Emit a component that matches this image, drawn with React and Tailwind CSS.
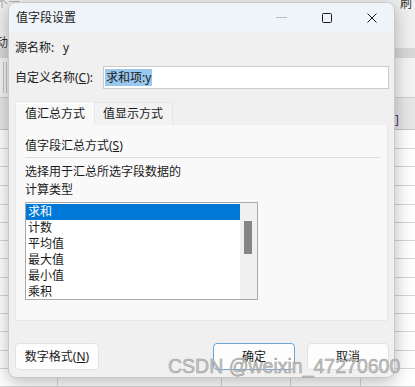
import React from 'react';

const font = "font-['Noto_Sans','Noto_Sans_CJK_SC',sans-serif]";

// spreadsheet rows behind the dialog (heights include the bottom line)
const gridRows = [20, 19, 20, 19, 19, 19, 19, 19, 19, 19, 19, 19, 19, 19];
const items = ['求和', '计数', '平均值', '最大值', '最小值', '乘积'];

const GridRow = ({ h }) => (
    <div className="flex border-b border-[#d6d6d6]" style={{ height: h }}>
        <div className="w-[58px] border-r border-[#d6d6d6]" />
        <div className="w-[164px] border-r border-[#d6d6d6]" />
        <div className="w-[69px] border-r border-[#d6d6d6]" />
        <div className="w-[70px] border-r border-[#d6d6d6]" />
        <div className="flex-1" />
    </div>
);

const Background = () => (
    <div className="flex flex-col w-[415px] h-[387px]">
        {/* ribbon */}
        <div className="h-[48px] bg-[#f0f0f0] flex justify-between text-[12px] text-[#333]">
            <div className="flex flex-col -ml-[4px]">
                <span className="text-[#aaa] leading-[10px] -mt-[2px]">不宁</span>
                <span className="mt-[28px] leading-[14px]">动</span>
            </div>
            <span className="mr-[3px] -mt-[3px] leading-[14px]">刷</span>
        </div>
        <div className="h-[10px] bg-[#d8d8d8]" />
        {/* formula bar */}
        <div className="h-[42px] bg-[#f4f4f4] border-b border-[#cfcfcf] flex">
            <div className="w-[3px]" />
            <div className="w-[4px] border-x border-[#c4c4c4] mt-[4px] mb-[4px]" />
        </div>
        {/* column header */}
        <div className="h-[33px] bg-[#e6e6e6] border-b border-[#c8c8c8] flex justify-end items-end pb-[2px]">
            <span className="text-[12px] leading-[14px] text-[#5b2a86] mr-[16px]">]</span>
        </div>
        {gridRows.map((h, i) => (
            <GridRow key={i} h={h} />
        ))}
    </div>
);

const Dialog = () => (
    <div className={`absolute left-[8px] top-[2px] w-[387px] h-[376px] rounded-[8px] border border-[#c9c9c9] bg-[#f0f0f0] overflow-hidden shadow-[0_4px_18px_rgba(0,0,0,0.28)] flex flex-col text-[12px] text-[#1a1a1a] ${font}`}>
        {/* title bar */}
        <div className="h-[29px] bg-[#eef4f9] flex items-center">
            <span className="pl-[7px] flex-1 leading-[16px]">值字段设置</span>
            <div className="w-[45px] h-[29px] flex items-center justify-center">
                <div className="w-[11px] h-[1px] bg-[#bdbdbd]" />
            </div>
            <div className="w-[45px] h-[29px] flex items-center justify-center">
                <svg width="10" height="10" viewBox="0 0 10 10">
                    <rect x="0.5" y="0.5" width="9" height="9" rx="1" fill="none" stroke="#1a1a1a" strokeWidth="1" />
                </svg>
            </div>
            <div className="w-[45px] h-[29px] flex items-center justify-center">
                <svg width="10" height="10" viewBox="0 0 10 10">
                    <path d="M0.5 0.5 L9.5 9.5 M9.5 0.5 L0.5 9.5" stroke="#1a1a1a" strokeWidth="1" />
                </svg>
            </div>
        </div>

        {/* body */}
        <div className="flex flex-col pl-[6px] pr-[5px]">
            <div className="mt-[6px] h-[20px] flex items-center">
                <span className="w-[48px]">源名称:</span>
                <span>y</span>
            </div>

            <div className="mt-[8px] h-[23px] flex items-center">
                <span className="w-[88px]">自定义名称(<span className="underline">C</span>):</span>
                <div className="flex-1 h-[23px] bg-white border border-[#cbcbcb] flex items-center pl-[1px]">
                    <span className="bg-[#99c9ef] h-[17px] leading-[17px] px-[1px]">求和项:y</span>
                </div>
            </div>

            {/* tabs */}
            <div className="mt-[12px] flex items-end h-[24px]">
                <div className="w-[80px] h-[24px] bg-[#f9f9f9] border border-b-0 border-[#e8e8e8] flex items-center pl-[9px]">
                    值汇总方式
                </div>
                <div className="w-[78px] h-[23px] bg-[#f2f2f2] border border-l-0 border-b-0 border-[#e6e6e6] flex items-center pl-[8px]">
                    值显示方式
                </div>
            </div>

            {/* tab panel */}
            <div className="w-[373px] h-[196px] bg-[#f9f9f9] border border-t-0 border-[#e8e8e8] flex flex-col pl-[9px]">
                <div className="mt-[12px] h-[18px] leading-[18px]">
                    值字段汇总方式(<span className="underline">S</span>)
                </div>
                <div className="mt-[2px] mr-[7px] h-[1px] bg-[#dcdcdc]" />
                <div className="mt-[5px] h-[18px] leading-[18px]">选择用于汇总所选字段数据的</div>
                <div className="h-[18px] leading-[18px]">计算类型</div>

                {/* list box */}
                <div className="mt-[3px] w-[233px] h-[98px] border border-[#a8a8a8] bg-white flex">
                    <div className="w-[214px] pt-[1px] flex flex-col">
                        {items.map((t, i) => (
                            <div
                                key={t}
                                className={`h-[16px] leading-[16px] pl-[2px] ${i === 0 ? 'bg-[#0078d7] text-white' : ''}`}
                            >
                                {t}
                            </div>
                        ))}
                    </div>
                    <div className="w-[17px] bg-[#f0f0f0] pl-[4px] pt-[18px]">
                        <div className="w-[8px] h-[33px] bg-[#868686]" />
                    </div>
                </div>
            </div>

            {/* buttons */}
            <div className="mt-[22px] flex h-[27px]">
                <button className="w-[84px] h-[27px] bg-[#fdfdfd] border border-[#e2e2e2] rounded-[4px]">
                    数字格式(<span className="underline">N</span>)
                </button>
                <div className="flex-1" />
                <button className="w-[82px] h-[27px] bg-[#fdfdfd] border border-[#6aa5d9] rounded-[4px]">
                    确定
                </button>
                <button className="ml-[12px] w-[82px] h-[27px] bg-[#fdfdfd] border border-[#e2e2e2] rounded-[4px]">
                    取消
                </button>
            </div>
        </div>
    </div>
);

const App = () => {
    return (
        <div className={`relative w-[415px] h-[387px] overflow-hidden bg-white ${font}`}>
            <Background />
            <Dialog />
            {/* watermark */}
            <div className="absolute left-[168px] top-[355px] text-[19.5px] leading-[22px] font-['Liberation_Sans',sans-serif] text-[#c4c4c4] [-webkit-text-stroke:0.5px_#9a9a9a] whitespace-nowrap">
                CSDN @weixin_47270600
            </div>
        </div>
    );
};

export default App;
